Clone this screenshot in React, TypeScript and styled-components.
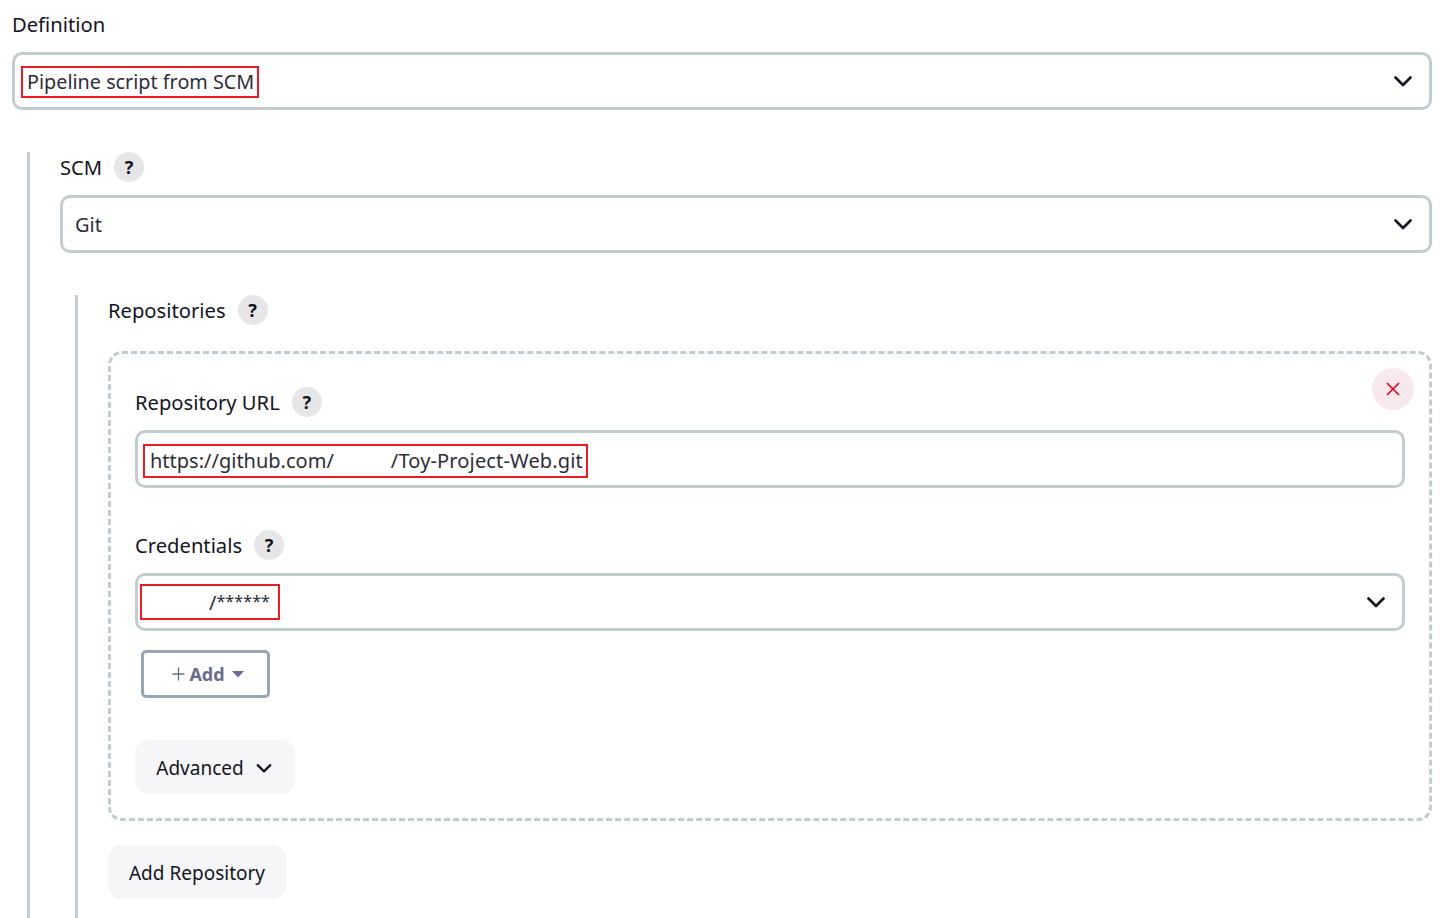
import React, { FC } from "react";
import styled, { createGlobalStyle } from "styled-components";

const GlobalStyle = createGlobalStyle`
  html, body {
    margin: 0;
    padding: 0;
    height: 918px;
    overflow: hidden;
    background: #fff;
    font-family: "Noto Sans", "Open Sans", sans-serif;
    color: #14141f;
  }
`;

const Chevron: FC<{ size?: number }> = ({ size = 24 }) => (
  <svg width={size} height={size} viewBox="0 0 24 24" fill="none">
    <path
      d="M4.5 8.5 L12 16 L19.5 8.5"
      stroke="#14141f"
      strokeWidth="2.7"
      strokeLinecap="round"
      strokeLinejoin="round"
    />
  </svg>
);

const Help: FC = () => <HelpBubble>?</HelpBubble>;

const App: FC = () => (
  <Page>
    <GlobalStyle />
    <Label>Definition</Label>
    <SelectBox>
      <MarkedDefinition>Pipeline script from SCM</MarkedDefinition>
      <Chevron />
    </SelectBox>

    <Nested>
      <Label>
        SCM <Help />
      </Label>
      <SelectBox>
        <span>Git</span>
        <Chevron />
      </SelectBox>

      <Nested>
        <Label>
          Repositories <Help />
        </Label>
        <RepeatedCard>
          <CloseButton>
            <svg width="14" height="14" viewBox="0 0 14 14" fill="none">
              <path d="M1 1 L13 13 M13 1 L1 13" stroke="#e6001f" strokeWidth="1.6" />
            </svg>
          </CloseButton>

          <Label>
            Repository URL <Help />
          </Label>
          <InputBox>
            <MarkedUrl>
              https://github.com/
              <Redacted $width={57} />
              <UrlTail>/Toy-Project-Web.git</UrlTail>
            </MarkedUrl>
          </InputBox>

          <CredentialsLabel>
            Credentials <Help />
          </CredentialsLabel>
          <SelectBox>
            <MarkedCredentials>
              <Redacted $width={67} />/<Stars>******</Stars>
            </MarkedCredentials>
            <Chevron />
          </SelectBox>

          <AddButton>
            <svg width="14" height="14" viewBox="0 0 14 14" fill="none">
              <path d="M7.5 0.5 V13.5 M1.5 7 H13.5" stroke="#6d6b8d" strokeWidth="1.3" />
            </svg>
            Add
            <svg width="12" height="7" viewBox="0 0 12 7" style={{ marginLeft: 3 }}>
              <path d="M0 0 H12 L6 6.5 Z" fill="#6d6b8d" />
            </svg>
          </AddButton>

          <AdvancedButton>
            Advanced
            <Chevron size={20} />
          </AdvancedButton>
        </RepeatedCard>
        <AddRepository>Add Repository</AddRepository>
      </Nested>
    </Nested>
  </Page>
);

const Page = styled.div`
  box-sizing: border-box;
  width: 1444px;
  height: 918px;
  overflow: hidden;
  padding: 9px 12px 0;
  font-size: 20px;
`;

const Label = styled.div`
  display: flex;
  align-items: center;
  gap: 12px;
  height: 30px;
  margin-bottom: 13px;
  font-size: 20.2px;
  line-height: 30px;
`;

const CredentialsLabel = styled(Label)`
  margin-top: 42px;
`;

const HelpBubble = styled.span`
  display: flex;
  align-items: center;
  justify-content: center;
  width: 30px;
  height: 30px;
  border-radius: 50%;
  background: #e6e6e8;
  font-size: 18px;
  font-weight: 700;
`;

const SelectBox = styled.div`
  box-sizing: border-box;
  display: flex;
  align-items: center;
  justify-content: space-between;
  height: 58px;
  padding: 0 14px 0 12px;
  border: 3px solid #c3ccd1;
  border-radius: 10px;
  background: #fff;
  color: #2d2d38;
`;

const InputBox = styled(SelectBox)`
  justify-content: flex-start;
`;

const Marked = styled.span`
  box-sizing: border-box;
  display: inline-flex;
  align-items: center;
  border: 2px solid #ec1c24;
  white-space: pre;
`;

const MarkedDefinition = styled(Marked)`
  height: 32px;
  margin: 2px 0 0 -6px;
  padding: 0 3px 2px 4px;
  font-size: 19.8px;
`;

const MarkedUrl = styled(Marked)`
  height: 34px;
  margin: 4px 0 0 -7px;
  padding: 0 3px 2px 5px;
`;

const UrlTail = styled.span`
  letter-spacing: 0.15px;
`;

const MarkedCredentials = styled(Marked)`
  width: 140px;
  height: 36px;
  margin-left: -10px;
`;

const Stars = styled.span`
  margin-bottom: 3px;
  font-size: 16.2px;
`;

const Redacted = styled.span<{ $width: number }>`
  display: inline-block;
  width: ${(props) => props.$width}px;
`;

const Nested = styled.div`
  margin-top: 42px;
  margin-left: 15px;
  padding-left: 30px;
  padding-bottom: 60px;
  border-left: 3px solid #c3ccd1;
`;

const RepeatedCard = styled.div`
  position: relative;
  box-sizing: border-box;
  height: 470px;
  margin-top: 26px;
  padding: 33px 24px 0;
  border: 3px dashed #c3ccd1;
  border-radius: 14px;
`;

const CloseButton = styled.div`
  position: absolute;
  top: 14px;
  right: 15px;
  display: flex;
  align-items: center;
  justify-content: center;
  width: 42px;
  height: 42px;
  border-radius: 50%;
  background: #f8e9ed;
`;

const AddButton = styled.div`
  box-sizing: border-box;
  display: flex;
  align-items: center;
  justify-content: center;
  gap: 4px;
  width: 129px;
  height: 48px;
  margin: 19px 0 0 6px;
  padding-left: 4px;
  border: 3px solid #9aa7b0;
  border-radius: 5px;
  color: #6d6b8d;
  font-size: 18px;
  font-weight: 700;
`;

const GhostButton = styled.div`
  box-sizing: border-box;
  display: flex;
  align-items: center;
  justify-content: center;
  height: 54px;
  padding-top: 2px;
  border-radius: 14px;
  background: #f6f6f8;
  font-size: 19px;
`;

const AdvancedButton = styled(GhostButton)`
  gap: 10px;
  width: 160px;
  margin-top: 42px;
`;

const AddRepository = styled(GhostButton)`
  width: 178px;
  margin-top: 24px;
`;

export default App;
